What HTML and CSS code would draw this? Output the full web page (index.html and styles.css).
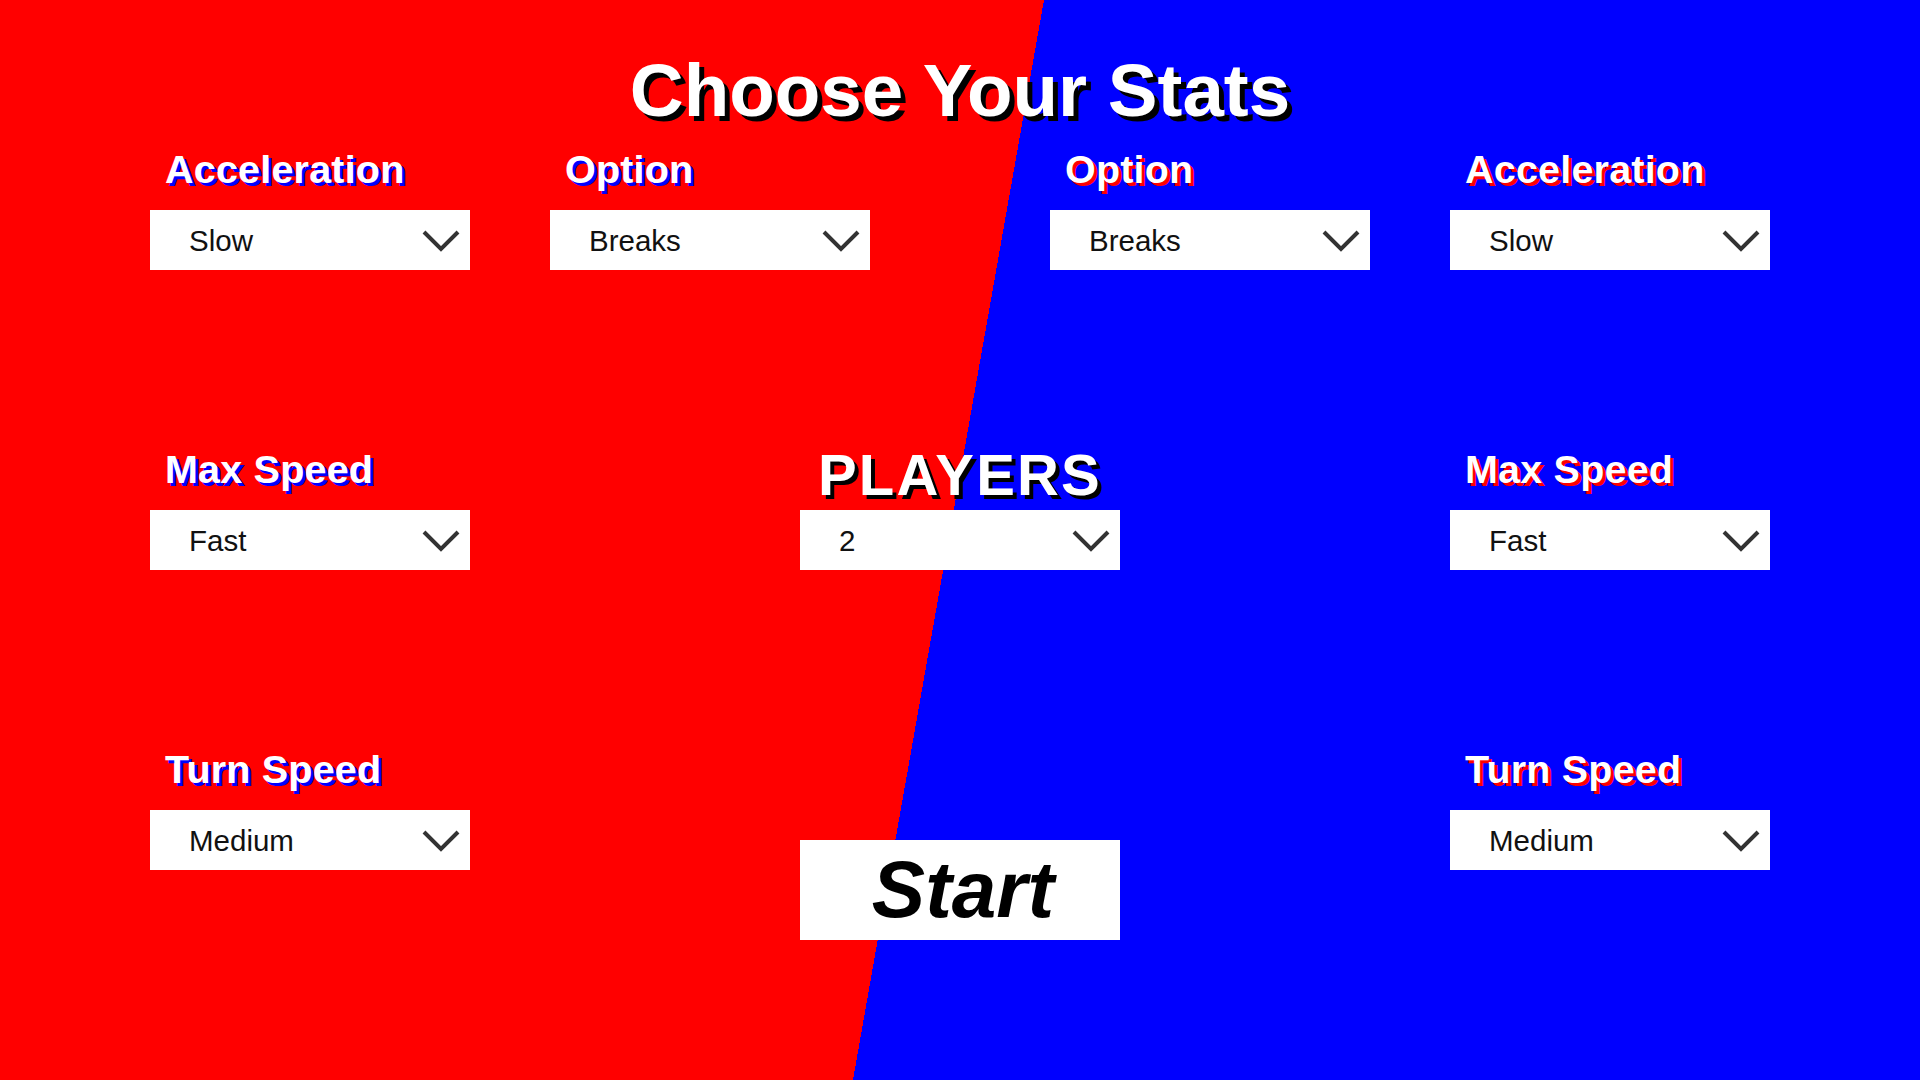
FILE: index.html
```html
<!DOCTYPE html>
<html lang="en">
<head>
<meta charset="utf-8">
<title>Choose Your Stats</title>
<link rel="stylesheet" href="styles.css">
</head>
<body>
<main class="screen">
  <h1 class="title">Choose Your Stats</h1>

  <section class="row row-top">
    <div class="group">
      <div class="field p1">
        <div class="label">Acceleration</div>
        <div class="select"><span>Slow</span><svg class="chev" width="38" height="22" viewBox="0 0 38 22"><polyline points="2,2 19,19 36,2"/></svg></div>
      </div>
      <div class="field p1">
        <div class="label">Option</div>
        <div class="select"><span>Breaks</span><svg class="chev" width="38" height="22" viewBox="0 0 38 22"><polyline points="2,2 19,19 36,2"/></svg></div>
      </div>
    </div>
    <div class="group">
      <div class="field p2">
        <div class="label">Option</div>
        <div class="select"><span>Breaks</span><svg class="chev" width="38" height="22" viewBox="0 0 38 22"><polyline points="2,2 19,19 36,2"/></svg></div>
      </div>
      <div class="field p2">
        <div class="label">Acceleration</div>
        <div class="select"><span>Slow</span><svg class="chev" width="38" height="22" viewBox="0 0 38 22"><polyline points="2,2 19,19 36,2"/></svg></div>
      </div>
    </div>
  </section>

  <section class="row row-mid">
    <div class="field p1">
      <div class="label">Max Speed</div>
      <div class="select"><span>Fast</span><svg class="chev" width="38" height="22" viewBox="0 0 38 22"><polyline points="2,2 19,19 36,2"/></svg></div>
    </div>
    <div class="center">
      <div class="players">PLAYERS</div>
      <div class="select"><span>2</span><svg class="chev" width="38" height="22" viewBox="0 0 38 22"><polyline points="2,2 19,19 36,2"/></svg></div>
    </div>
    <div class="field p2">
      <div class="label">Max Speed</div>
      <div class="select"><span>Fast</span><svg class="chev" width="38" height="22" viewBox="0 0 38 22"><polyline points="2,2 19,19 36,2"/></svg></div>
    </div>
  </section>

  <section class="row row-bottom">
    <div class="field p1">
      <div class="label">Turn Speed</div>
      <div class="select"><span>Medium</span><svg class="chev" width="38" height="22" viewBox="0 0 38 22"><polyline points="2,2 19,19 36,2"/></svg></div>
    </div>
    <button class="start" type="button">Start</button>
    <div class="field p2">
      <div class="label">Turn Speed</div>
      <div class="select"><span>Medium</span><svg class="chev" width="38" height="22" viewBox="0 0 38 22"><polyline points="2,2 19,19 36,2"/></svg></div>
    </div>
  </section>
</main>
</body>
</html>
```

FILE: styles.css
```css
html, body {
  margin: 0;
  padding: 0;
}

body {
  width: 1920px;
  height: 1080px;
  overflow: hidden;
  font-family: "Liberation Sans", Arial, sans-serif;
  background: linear-gradient(100.03deg, #ff0000 1028px, #0000ff 1028px);
}

.screen {
  width: 1920px;
  height: 1080px;
}

.title {
  margin: 0;
  padding-top: 53px;
  font-size: 74.6px;
  line-height: 74px;
  font-weight: bold;
  color: #fff;
  text-align: center;
  text-shadow: 5px 5px 0 #000;
}

.row {
  display: flex;
  justify-content: space-between;
  padding: 0 150px;
}

.row-top {
  margin-top: 23px;
}

.group {
  display: flex;
  gap: 80px;
}

.field {
  width: 320px;
}

.label {
  font-size: 39.5px;
  line-height: 39px;
  font-weight: bold;
  color: #fff;
  padding-left: 15px;
  margin-bottom: 21px;
  letter-spacing: 0.2px;
}

.p1 .label {
  text-shadow: 3px 3px 0 #0000ff;
}

.p2 .label {
  text-shadow: 3px 3px 0 #ff0000;
}

.select {
  box-sizing: border-box;
  height: 60px;
  background: #fff;
  display: flex;
  align-items: center;
  justify-content: space-between;
  padding: 2px 10px 0 39px;
  font-size: 29.5px;
  color: #111;
}

.chev polyline {
  fill: none;
  stroke: #333;
  stroke-width: 4;
}

.row-mid {
  margin-top: 176px;
  align-items: flex-end;
}

.center {
  width: 320px;
  display: flex;
  flex-direction: column;
}

.players {
  font-size: 58px;
  line-height: 58px;
  font-weight: bold;
  color: #fff;
  text-align: center;
  letter-spacing: 2.2px;
  text-shadow: 4px 4px 0 #000;
  margin-bottom: 6px;
}

.row-bottom {
  margin-top: 180px;
  align-items: flex-start;
}

.start {
  margin: 90px 0 0;
  width: 320px;
  height: 100px;
  border: 0;
  padding: 0 0 0 6px;
  background: #fff;
  display: flex;
  align-items: center;
  justify-content: center;
  font-family: "Liberation Sans", Arial, sans-serif;
  font-size: 80px;
  line-height: 1;
  font-weight: bold;
  font-style: italic;
  color: #000;
}
```
